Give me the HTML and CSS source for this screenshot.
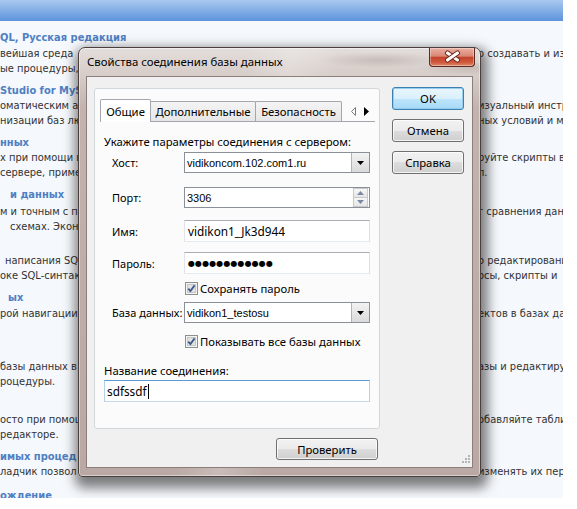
FILE: index.html
```html
<!DOCTYPE html>
<html lang="ru">
<head>
<meta charset="utf-8">
<title>Свойства соединения базы данных</title>
<link rel="stylesheet" href="styles.css">
</head>
<body>
<div class="page">
  <div class="topbar"></div>
  <div class="rows">
    <div class="row h first"><span class="l">QL, Русская редакция</span><span class="r"></span></div>
    <div class="row a1"><span class="l">вейшая среда</span><span class="r">о создавать и изменять</span></div>
    <div class="row"><span class="l">ые процедуры,</span><span class="r"></span></div>
    <div class="row h"><span class="l">Studio for MyS</span><span class="r"></span></div>
    <div class="row"><span class="l">оматическим а</span><span class="r">изуальный инструмент</span></div>
    <div class="row"><span class="l">низации баз лю</span><span class="r">ных условий и масштабов</span></div>
    <div class="row h"><span class="l">нных</span><span class="r"></span></div>
    <div class="row"><span class="l">х при помощи г</span><span class="r">руйте скрипты в</span></div>
    <div class="row"><span class="l">сервере, приме</span><span class="r">л.</span></div>
    <div class="row h"><span class="l i10">и данных</span><span class="r"></span></div>
    <div class="row a2"><span class="l">м и точным с п</span><span class="r">г сравнения данных</span></div>
    <div class="row"><span class="l i10">схемах. Эконо</span><span class="r"></span></div>
    <div class="row g19"><span class="l i5">написания SQL</span><span class="r">о редактирования</span></div>
    <div class="row"><span class="l">оке SQL-синтак</span><span class="r">осы, скрипты и</span></div>
    <div class="row h"><span class="l i8">ых</span><span class="r"></span></div>
    <div class="row a1"><span class="l">рой навигации</span><span class="r">ектов в базах данных</span></div>
    <div class="row g38"><span class="l">базы данных в</span><span class="r">азы и редактируйте</span></div>
    <div class="row"><span class="l">роцедуры.</span><span class="r"></span></div>
    <div class="row g23"><span class="l">осто при помощ</span><span class="r">обавляйте таблицы</span></div>
    <div class="row"><span class="l">редакторе.</span><span class="r"></span></div>
    <div class="row h"><span class="l">имых процед</span><span class="r"></span></div>
    <div class="row"><span class="l">ладчик позвол</span><span class="r">изменять их переменные</span></div>
    <div class="row h g9"><span class="l">ождение</span><span class="r"></span></div>
  </div>

  <div class="dialog">
    <div class="titlebar">
      <div class="title">Свойства соединения базы данных</div>
      <div class="wred"><div class="wglyph"></div></div>
    </div>
    <div class="client">
      <div class="leftcol">
        <div class="box">
          <div class="tabs">
            <div class="tab sel w1">Общие</div>
            <div class="tab w2">Дополнительные</div>
            <div class="tab w3">Безопасность</div>
            <div class="scroll">
              <svg width="33" height="20" viewBox="0 0 33 20"><path d="M13.5 6.5 L9.5 10.5 L13.5 14.5 Z" fill="none" stroke="#7a7a7a" stroke-width="1"/><path d="M22 6 L27 10.5 L22 15 Z" fill="#000"/></svg>
            </div>
          </div>
          <div class="hint">Укажите параметры соединения с сервером:</div>
          <div class="frow r-host">
            <span class="lab">Хост:</span>
            <div class="combo"><span class="ctext">vidikoncom.102.com1.ru</span><span class="drop"><svg width="7" height="4" viewBox="0 0 7 4"><path d="M0 0 H7 L3.5 4 Z" fill="#000"/></svg></span></div>
          </div>
          <div class="frow r-port">
            <span class="lab">Порт:</span>
            <div class="combo spinbox"><span class="ctext">3306</span><span class="spin"><span class="sbtn"><svg width="7" height="4" viewBox="0 0 7 4"><path d="M0 4 H7 L3.5 0 Z" fill="#7a8aa6"/></svg></span><span class="sbtn"><svg width="7" height="4" viewBox="0 0 7 4"><path d="M0 0 H7 L3.5 4 Z" fill="#7a8aa6"/></svg></span></span></div>
          </div>
          <div class="frow r-name">
            <span class="lab">Имя:</span>
            <div class="edit">vidikon1_Jk3d944</div>
          </div>
          <div class="frow r-pass">
            <span class="lab">Пароль:</span>
            <div class="edit"><span class="dots">●●●●●●●●●●●●</span></div>
          </div>
          <div class="cb r-cb1">
            <svg width="13" height="13" viewBox="0 0 13 13"><rect x="0.5" y="0.5" width="12" height="12" fill="#f4f4f4" stroke="#8e8f8f"/><rect x="2.5" y="2.5" width="8" height="8" fill="#e2e2e2" stroke="#c6c6c6"/><path d="M3.3 6.6 L5.4 9 L9.6 3.4" fill="none" stroke="#3c5a8c" stroke-width="1.8"/></svg>
            <span class="cbtext">Сохранять пароль</span>
          </div>
          <div class="frow r-db">
            <span class="lab">База данных:</span>
            <div class="combo"><span class="ctext">vidikon1_testosu</span><span class="drop"><svg width="7" height="4" viewBox="0 0 7 4"><path d="M0 0 H7 L3.5 4 Z" fill="#000"/></svg></span></div>
          </div>
          <div class="cb r-cb2">
            <svg width="13" height="13" viewBox="0 0 13 13"><rect x="0.5" y="0.5" width="12" height="12" fill="#f4f4f4" stroke="#8e8f8f"/><rect x="2.5" y="2.5" width="8" height="8" fill="#e2e2e2" stroke="#c6c6c6"/><path d="M3.3 6.6 L5.4 9 L9.6 3.4" fill="none" stroke="#3c5a8c" stroke-width="1.8"/></svg>
            <span class="cbtext">Показывать все базы данных</span>
          </div>
          <div class="namelab">Название соединения:</div>
          <div class="edit focus">sdfssdf<span class="caret"></span></div>
        </div>
        <div class="btn check">Проверить</div>
      </div>
      <div class="btns">
        <div class="btn def">OK</div>
        <div class="btn">Отмена</div>
        <div class="btn">Справка</div>
      </div>
      <svg class="grip" width="10" height="10" viewBox="0 0 10 10"><g fill="#b5b5b5"><rect x="8" y="0" width="2" height="2"/><rect x="5" y="3" width="2" height="2"/><rect x="8" y="3" width="2" height="2"/><rect x="2" y="6" width="2" height="2"/><rect x="5" y="6" width="2" height="2"/><rect x="8" y="6" width="2" height="2"/></g></svg>
    </div>
  </div>
</div>
</body>
</html>
```
FILE: styles.css
```css
* { box-sizing: border-box; }
html, body { margin: 0; padding: 0; background: #ffffff; }
body { width: 577px; height: 509px; overflow: hidden; position: relative; }

.page {
  width: 563px; height: 498px; position: relative; overflow: hidden;
  background: #f5f8fc;
  font-family: "DejaVu Sans Condensed", "DejaVu Sans", sans-serif;
  font-size: 11px; color: #333333;
}
.topbar { height: 21px; background: linear-gradient(#a9c9f0, #5d93dc); }
.rows { padding-top: 9px; }
.row { display: flex; height: 15px; line-height: 15px; white-space: nowrap; }
.l { width: 476px; flex-shrink: 0; overflow: hidden; }
.r { flex: 1; overflow: hidden; padding-left: 2px; }
.h { margin-top: 7px; font-weight: bold; color: #4f7fc3; font-size: 11px; }
.h.first { margin-top: 0; }
.a1 { margin-top: 1px; }
.a2 { margin-top: 2px; }
.g19 { margin-top: 19px; }
.g38 { margin-top: 38px; }
.g23 { margin-top: 23px; }
.g9 { margin-top: 9px; }
.i5 { padding-left: 5px; }
.i8 { padding-left: 8px; }
.i10 { padding-left: 10px; }

/* dialog window */
.dialog {
  position: absolute; left: 78px; top: 47px; width: 403px; height: 430px;
  border: 1px solid #4a3f3d; border-radius: 7px 7px 4px 4px;
  padding: 0 7px 8px;
  display: flex; flex-direction: column;
  background:
    radial-gradient(ellipse 60px 8px at 300px 12px, rgba(90,75,72,.18), rgba(90,75,72,0)),
    radial-gradient(ellipse 50px 7px at 390px 20px, rgba(90,75,72,.15), rgba(90,75,72,0)),
    linear-gradient(100deg, rgba(255,255,255,0) 35%, rgba(255,255,255,.22) 45%, rgba(255,255,255,0) 55%),
    linear-gradient(#e3dedb 0, #d6ccc8 28px, #c2b3af 60px, #b9a8a4 100%);
  box-shadow: inset 0 0 0 1px rgba(255,255,255,.45), 2px 6px 12px 5px rgba(0,0,0,.5);
  font-family: "Noto Sans", sans-serif; font-size: 11.3px; color: #000;
}
.titlebar { height: 28px; display: flex; align-items: flex-start; flex-shrink: 0; }
.title { padding-left: 1px; margin-top: 6px; white-space: nowrap; font-size: 11.4px; line-height: 16px; }
.wred {
  margin-left: auto; margin-right: -2px;
  width: 46px; height: 19px; flex-shrink: 0; position: relative;
  border: 1px solid #5e2a22; border-top-width: 0; border-radius: 0 0 4px 4px;
  background-color: #c9553b;
  background-image: linear-gradient(#eab0a2, #d98775 45%, #c4442b 52%, #cf5a3e 80%, #e08a6a);
  box-shadow: inset 0 0 0 1px rgba(255,255,255,.35);
}
.wglyph { position: absolute; left: 16px; top: 4px; width: 13px; height: 10px; }
.wglyph::before, .wglyph::after {
  content: ""; position: absolute; left: -1px; top: 3px; width: 15px; height: 3px;
  background: #fff; border-radius: 1px;
  box-shadow: 0 0 0 1px #6a2519;
}
.wglyph::before { transform: rotate(35deg); }
.wglyph::after { transform: rotate(-35deg); }

.client {
  flex: 1; position: relative;
  background: #f0f0f0; border: 1px solid #8b7e7b;
  display: flex; padding: 11px 0 0 7px;
}
.leftcol { width: 286px; display: flex; flex-direction: column; }
.box {
  height: 341px; border: 1px solid #d2d7db; border-radius: 3px;
  background: #fbfbfb; padding: 10px 4px 0 5px;
  display: flex; flex-direction: column;
}
.tabs {
  display: flex; align-items: flex-end; height: 23px;
  border-bottom: 1px solid #a3a6ac;
}
.tab {
  height: 20px; border: 1px solid #a3a6ac; border-bottom: none;
  border-radius: 2px 2px 0 0;
  background: linear-gradient(#f4f4f4, #e6e6e6);
  display: flex; align-items: center; justify-content: center;
  white-space: nowrap; margin-left: -1px; position: relative;
}
.tab.sel { height: 23px; margin-bottom: -1px; background: #ffffff; z-index: 1; margin-left: 0; }
.w1 { width: 51px; }
.w2 { width: 106px; }
.w3 { width: 87px; }
.scroll { margin-left: auto; width: 33px; height: 20px; }
.scroll svg { display: block; }

.hint { margin-top: 12px; height: 16px; line-height: 16px; padding-left: 4px; white-space: nowrap; }
.frow { display: flex; align-items: center; }
.lab { width: 84px; flex-shrink: 0; padding-left: 12px; white-space: nowrap; font-size: 11px; }
.r-host { margin-top: 2px; }
.r-port { margin-top: 14px; }
.r-name { margin-top: 12px; }
.r-pass { margin-top: 10px; }
.r-cb1 { margin-top: 8px; }
.r-db { margin-top: 7px; }
.r-cb2 { margin-top: 12px; }

.combo {
  width: 186px; height: 21px; display: flex; align-items: center;
  border: 1px solid #8a8f98; background: #fff; padding: 0 0 0 2px;
  font-family: "Liberation Sans", sans-serif; font-size: 11px;
}
.ctext { flex: 1; white-space: nowrap; }
.drop {
  width: 18px; height: 19px; border-left: 1px solid #b3b3b3;
  background: linear-gradient(#f3f3f3, #dadada);
  display: flex; align-items: center; justify-content: center;
}
.spin { width: 15px; height: 19px; display: flex; flex-direction: column; margin-right: 1px; }
.sbtn {
  flex: 1; border: 1px solid #c9c9c9; background: linear-gradient(#f7f7f7, #e6e6e6);
  display: flex; align-items: center; justify-content: center;
}
.sbtn + .sbtn { border-top: none; }
.edit {
  width: 186px; height: 22px; display: flex; align-items: center;
  border: 1px solid; border-color: #abadb3 #dbdfe6 #e3e9ef #e2e3ea;
  background: #fff; padding-left: 3px; white-space: nowrap; font-size: 11.8px;
}
.dots { font-family: "DejaVu Sans", sans-serif; font-size: 8px; letter-spacing: 0.1px; }
.cb { display: flex; align-items: center; height: 13px; padding-left: 85px; }
.cb svg { display: block; flex-shrink: 0; }
.cbtext { margin-left: 2px; white-space: nowrap; }
.namelab { margin-top: 15px; height: 16px; line-height: 16px; padding-left: 4px; white-space: nowrap; }
.edit.focus {
  width: 266px; margin: 1px 0 0 4px;
  border-color: #5b9bd1 #b5cfe7 #c5daed #b5cfe7; padding-left: 2px;
}
.caret { display: inline-block; width: 1px; height: 15px; background: #000; margin-left: 1px; }

.btns { margin-left: 12px; margin-top: -1px; width: 72px; display: flex; flex-direction: column; gap: 9px; }
.btn {
  height: 23px; border: 1px solid #707070; border-radius: 3px;
  background: linear-gradient(#f2f2f2 0, #ebebeb 50%, #dddddd 50%, #cfcfcf 100%);
  box-shadow: inset 0 0 0 1px rgba(255,255,255,.75);
  display: flex; align-items: center; justify-content: center; white-space: nowrap;
}
.btn.def {
  border-color: #3c7fb1;
  background: linear-gradient(#eaf6fd 0, #d9f0fc 50%, #bee6fd 50%, #a7d9f5 100%);
  box-shadow: inset 0 0 0 1px #94cdef;
}
.check { align-self: flex-end; width: 102px; height: 22px; margin: 9px 2px 0 0; }
.grip { position: absolute; right: 2px; bottom: 2px; }
```
